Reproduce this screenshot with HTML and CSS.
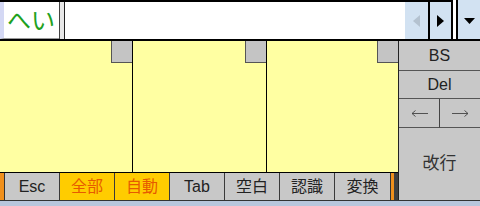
FILE: index.html
```html
<!DOCTYPE html>
<html lang="ja">
<head>
    <meta charset="UTF-8">
    <title>入力パネル</title>
    <link rel="stylesheet" href="styles.css">
</head>
<body>
    <div class="ime">
        <div class="top">
            <div class="edit">
                <div class="reading">へい</div>
                <div class="caret"></div>
                <div class="input"></div>
                <div class="nav nav-left">
                    <svg width="7" height="12" viewBox="0 0 7 12"><polygon points="7,0 0,6 7,12" fill="#b4c2d0"/></svg>
                </div>
                <div class="nav nav-right">
                    <svg width="7" height="12" viewBox="0 0 7 12"><polygon points="0,0 7,6 0,12" fill="#000"/></svg>
                </div>
            </div>
            <div class="gap"></div>
            <div class="nav nav-down">
                <svg width="11" height="6" viewBox="0 0 11 6"><polygon points="0,0 11,0 5.5,6" fill="#000"/></svg>
            </div>
        </div>

        <div class="middle">
            <div class="left">
                <div class="panels">
                    <div class="panel"><div class="corner"></div></div>
                    <div class="panel"><div class="corner"></div></div>
                    <div class="panel"><div class="corner"></div></div>
                </div>
                <div class="keys">
                    <div class="edge"></div>
                    <div class="key">Esc</div>
                    <div class="key on">全部</div>
                    <div class="key on">自動</div>
                    <div class="key">Tab</div>
                    <div class="key">空白</div>
                    <div class="key">認識</div>
                    <div class="key">変換</div>
                    <div class="edge"></div>
                </div>
            </div>
            <div class="side">
                <div class="skey bs">BS</div>
                <div class="skey del">Del</div>
                <div class="arrows">
                    <div class="skey">
                        <svg width="17" height="7" viewBox="0 0 17 7"><path d="M17 3.5H1M4.5 0.5L1 3.5L4.5 6.5" stroke="#444" stroke-width="0.9" fill="none"/></svg>
                    </div>
                    <div class="skey">
                        <svg width="17" height="7" viewBox="0 0 17 7"><path d="M0 3.5H16M12.5 0.5L16 3.5L12.5 6.5" stroke="#444" stroke-width="0.9" fill="none"/></svg>
                    </div>
                </div>
                <div class="skey enter">改行</div>
            </div>
        </div>

        <div class="footer"></div>
    </div>
</body>
</html>
```

FILE: styles.css
```css
body {
    margin: 0;
    background: #b8c6dc;
    font-family: "Liberation Sans", "Noto Sans CJK JP", sans-serif;
}
.ime {
    width: 480px;
    height: 206px;
    display: flex;
    flex-direction: column;
    overflow: hidden;
}
.top {
    height: 39px;
    display: flex;
    border-bottom: 2px solid #000;
    background: #fff;
}
.edit {
    width: 453px;
    display: flex;
    border-top: 2px solid #000;
    box-sizing: border-box;
}
.reading {
    width: 59px;
    box-sizing: border-box;
    border-left: 4px solid #d4d8f4;
    border-bottom: 1px solid #9a9a9a;
    padding-left: 3px;
    color: #1ea11e;
    font-family: "Noto Sans CJK JP", sans-serif;
    font-size: 24px;
    line-height: 34px;
}
.caret {
    width: 4px;
    border-left: 1px solid #444;
    border-right: 1px solid #222;
    background: #e8e8e8;
}
.input {
    flex: 1;
}
.nav {
    background: #d2e2f2;
    display: flex;
    align-items: center;
    justify-content: center;
}
.nav-left {
    width: 23px;
    border-right: 2px solid #000;
    margin-left: 2px;
}
.nav-right {
    width: 21px;
    border-right: 2px solid #000;
}
.gap {
    width: 3px;
    border-right: 2px solid #000;
}
.nav-down {
    flex: 1;
    padding-top: 2px;
}
.middle {
    display: flex;
    height: 159px;
}
.left {
    width: 398px;
    display: flex;
    flex-direction: column;
    border-right: 1px solid #222;
}
.panels {
    height: 131px;
    display: flex;
    border-bottom: 1px solid #000;
    background: #ffffa2;
}
.panel {
    width: 133px;
    border-right: 1px solid #000;
    display: flex;
    justify-content: flex-end;
    align-items: flex-start;
}
.panel:last-child {
    border-right: none;
    width: 132px;
}
.corner {
    width: 20px;
    height: 21px;
    background: #c4c4c4;
    border-left: 1px solid #555;
    border-bottom: 1px solid #555;
}
.keys {
    height: 27px;
    display: flex;
    background: #404040;
}
.edge {
    width: 4px;
    background: #f0901c;
    border-right: 1px solid #333;
}
.edge:last-child {
    width: 3px;
    border-right: none;
    border-left: 1px solid #333;
}
.key {
    width: 54px;
    background: #c8c8c8;
    border-right: 1px solid #3a3a3a;
    text-align: center;
    font-size: 16px;
    line-height: 27px;
    color: #222;
}
.key:nth-last-child(2) {
    border-right: none;
    width: 55px;
}
.key.on {
    background: #ffcc00;
    color: #e65a00;
}
.side {
    width: 81px;
    display: flex;
    flex-direction: column;
    background: #c8c8c8;
}
.skey {
    background: #c8c8c8;
    border-bottom: 1px solid #555;
    text-align: center;
    font-size: 16px;
    color: #222;
    display: flex;
    align-items: center;
    justify-content: center;
}
.bs {
    height: 29px;
}
.del {
    height: 27px;
}
.arrows {
    display: flex;
    height: 29px;
}
.arrows .skey {
    flex: 1;
}
.arrows .skey:first-child {
    border-right: 1px solid #444;
}
.enter {
    flex: 1;
    border-bottom: none;
    font-size: 17px;
    color: #333;
    padding-bottom: 6px;
}
.footer {
    flex: 1;
    border-top: 1px solid #333;
    background: #b8c6dc;
}
```
